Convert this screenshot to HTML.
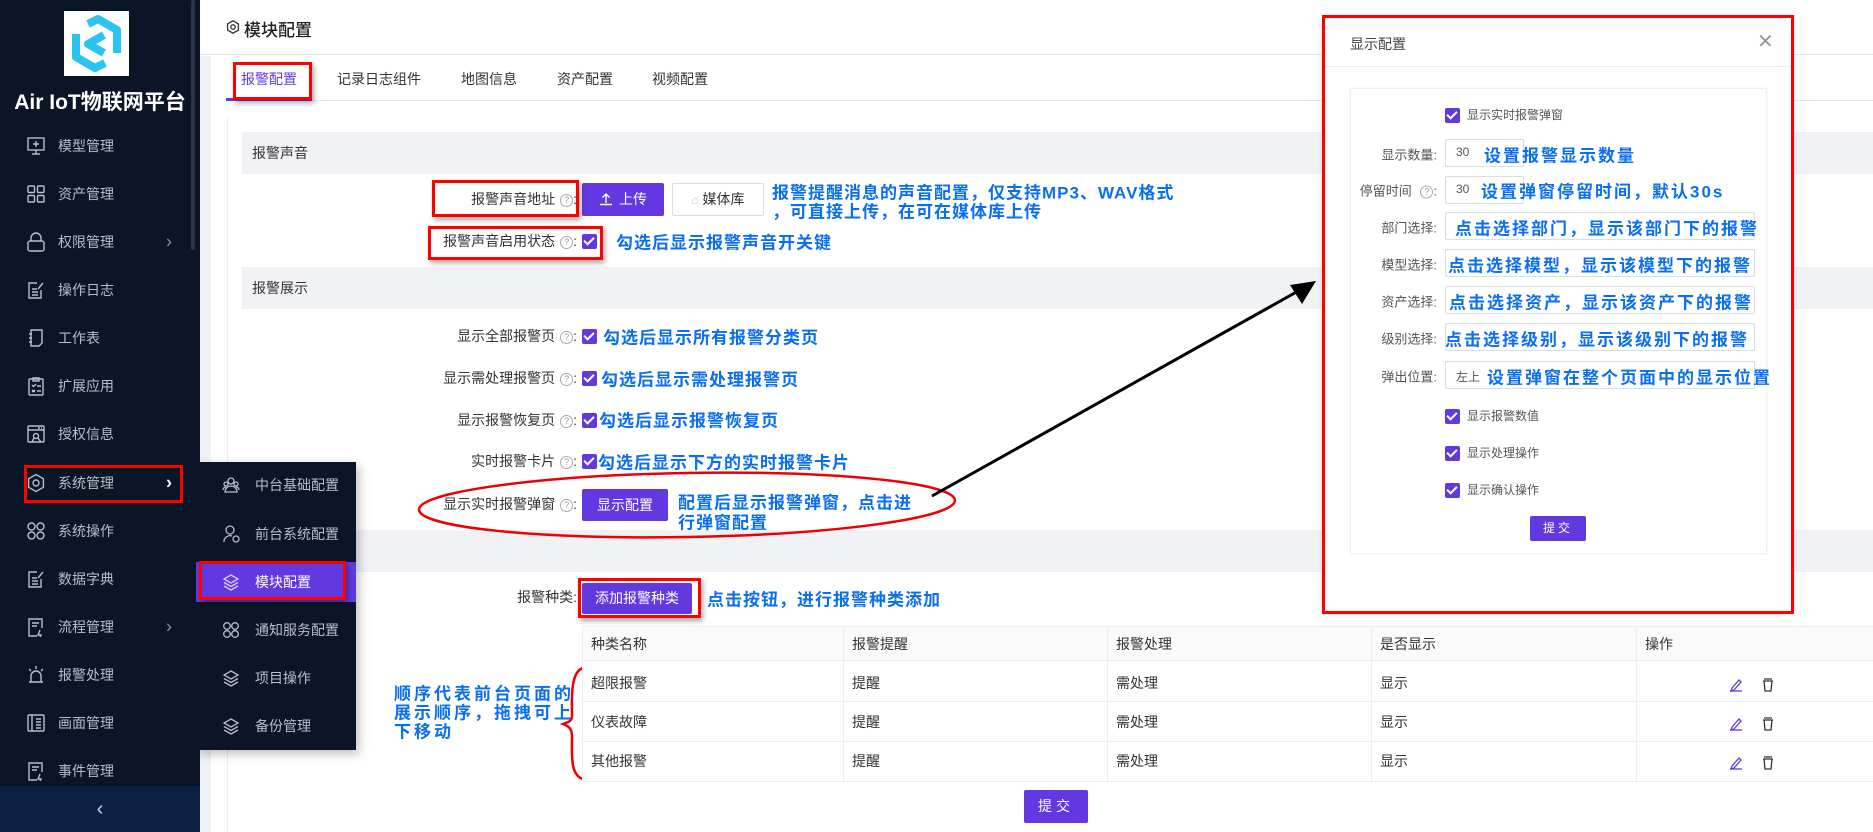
<!DOCTYPE html>
<html><head><meta charset="utf-8">
<style>
*{margin:0;padding:0;box-sizing:border-box}
body{width:1873px;height:832px;overflow:hidden;background:#fff;font-family:"Liberation Sans","Noto Sans CJK SC",sans-serif;font-size:14px;color:#333;position:relative}
.a{position:absolute}
.sb{left:0;top:0;width:200px;height:832px;background:#0a1528}
.mi{position:absolute;left:0;width:190px;height:48px;color:#b8bec9;font-size:14px}
.mi span{position:absolute;left:58px;top:50%;transform:translateY(-50%)}
.mi svg{position:absolute;left:26px;top:50%;transform:translateY(-50%)}
.arr{position:absolute;left:166px;top:50%;transform:translateY(-50%);color:#8a93a3;font-size:18px;font-style:normal}
.si{position:absolute;left:196px;width:160px;height:40px;color:#b8bec9}
.si span{position:absolute;left:59px;top:50%;transform:translateY(-50%)}
.si svg{position:absolute;left:26px;top:50%;transform:translateY(-50%)}
.band{position:absolute;left:242px;width:1631px;height:42px;background:#f0f2f5}
.band span{position:absolute;left:10px;top:50%;transform:translateY(-50%);color:#333}
.lbl{position:absolute;text-align:right;color:#333;white-space:nowrap;transform:translateY(-50%)}
.q{display:inline-block;width:13px;height:13px;border:1px solid #aaa;border-radius:50%;font-size:9px;line-height:11px;text-align:center;color:#999;margin-left:5px;vertical-align:1px;font-style:normal}
.cb{position:absolute;width:15px;height:15px;background:#6239e0;border-radius:2px}
.cb:after{content:"";position:absolute;left:4px;top:1px;width:4px;height:8px;border:solid #fff;border-width:0 2px 2px 0;transform:rotate(45deg)}
.btn{position:absolute;background:#6239e0;color:#fff;text-align:center;border-radius:2px}
.ann{position:absolute;color:#0a6ef0;font-weight:bold;font-size:17px;white-space:nowrap;letter-spacing:1px;transform:translateY(-50%);font-family:"Liberation Sans","Noto Sans CJK SC",sans-serif}
.red{position:absolute;border:3px solid #f00;box-shadow:2px 3px 5px rgba(0,0,0,.35)}
.td{position:absolute;font-size:14px;color:#333;transform:translateY(-50%)}
.dl{position:absolute;right:436px;font-size:13px;color:#555;transform:translateY(-50%);white-space:nowrap}
.inp{position:absolute;border:1px solid #ddd;border-radius:2px;background:#fff}
</style></head><body>

<!-- sidebar -->
<div class="a sb"></div>
<div class="a" style="left:191px;top:0;width:4px;height:250px;background:#2a3446;border-radius:2px"></div>
<div class="a" style="left:64px;top:11px;width:65px;height:65px;background:#fff">
<svg width="65" height="65" viewBox="0 0 65 65"><g fill="none" stroke="#2bc3f0" stroke-width="8" stroke-linejoin="round"><path d="M24 13 L34 8 L53 19 V42"/><path d="M41 52 L31 57 L12 46 V23"/><path d="M40 24 L24 33 L40 42"/></g></svg></div>
<div class="a" style="left:0;width:200px;top:86px;text-align:center;color:#fff;font-size:21px;font-weight:bold">Air IoT物联网平台</div>

<div class="mi" style="top:122px"><svg width="20" height="20" viewBox="0 0 20 20" fill="none" stroke="#b8bec9" stroke-width="1.4"><rect x="2" y="2" width="16" height="12"/><path d="M10 14v4M6 18h8M7 8h6M10 5v6"/></svg><span>模型管理</span></div>
<div class="mi" style="top:170px"><svg width="20" height="20" viewBox="0 0 20 20" fill="none" stroke="#b8bec9" stroke-width="1.4"><rect x="2" y="2" width="6.5" height="6.5" rx="1"/><rect x="11.5" y="2" width="6.5" height="6.5" rx="1"/><rect x="2" y="11.5" width="6.5" height="6.5" rx="1"/><rect x="11.5" y="11.5" width="6.5" height="6.5" rx="1"/></svg><span>资产管理</span></div>
<div class="mi" style="top:218px"><svg width="20" height="20" viewBox="0 0 20 20" fill="none" stroke="#b8bec9" stroke-width="1.4"><rect x="2" y="9" width="16" height="10" rx="2"/><path d="M5 9V6a5 5 0 0110 0v3"/></svg><span>权限管理</span><i class="arr">›</i></div>
<div class="mi" style="top:266px"><svg width="20" height="20" viewBox="0 0 20 20" fill="none" stroke="#b8bec9" stroke-width="1.4"><path d="M15 10v8H3V3h8M6 9h5M6 12h6M6 15h6M12 9l5-6"/></svg><span>操作日志</span></div>
<div class="mi" style="top:314px"><svg width="20" height="20" viewBox="0 0 20 20" fill="none" stroke="#b8bec9" stroke-width="1.4"><path d="M5 2h11v13l-3 3H5zM3 6h3M3 10h3M3 14h3"/></svg><span>工作表</span></div>
<div class="mi" style="top:362px"><svg width="20" height="20" viewBox="0 0 20 20" fill="none" stroke="#b8bec9" stroke-width="1.4"><rect x="3" y="3" width="14" height="16" rx="1"/><path d="M7 2h6v3H7zM6 9l1.5 1.5L10 8M11 10h4M6 14l3 2M9 14l-3 2M11 15h4"/></svg><span>扩展应用</span></div>
<div class="mi" style="top:410px"><svg width="20" height="20" viewBox="0 0 20 20" fill="none" stroke="#b8bec9" stroke-width="1.4"><rect x="2" y="2" width="16" height="16" rx="1"/><path d="M2 6h16M12 4h2M15 4h1"/><circle cx="10" cy="12" r="2.5"/><path d="M8 14l-2 4M12 14l3 4"/></svg><span>授权信息</span></div>
<div class="mi" style="top:459px"><svg width="20" height="20" viewBox="0 0 20 20" fill="none" stroke="#b8bec9" stroke-width="1.4"><path d="M10 1.5l7.4 4.25v8.5L10 18.5l-7.4-4.25v-8.5z"/><circle cx="10" cy="10" r="3"/></svg><span>系统管理</span><i class="arr" style="color:#fff;font-weight:bold">›</i></div>
<div class="mi" style="top:507px"><svg width="20" height="20" viewBox="0 0 20 20" fill="none" stroke="#b8bec9" stroke-width="1.4"><circle cx="5.5" cy="5.5" r="3.5"/><circle cx="14.5" cy="5.5" r="3.5"/><circle cx="5.5" cy="14.5" r="3.5"/><circle cx="14.5" cy="14.5" r="3.5"/></svg><span>系统操作</span></div>
<div class="mi" style="top:555px"><svg width="20" height="20" viewBox="0 0 20 20" fill="none" stroke="#b8bec9" stroke-width="1.4"><path d="M15 10v8H3V3h8M6 9h5M6 12h6M6 15h6M12 9l5-6"/></svg><span>数据字典</span></div>
<div class="mi" style="top:603px"><svg width="20" height="20" viewBox="0 0 20 20" fill="none" stroke="#b8bec9" stroke-width="1.4"><path d="M16 11V2H3v17h8M6 6h7M6 9h5M14 13l-2 5h3l-1 2"/></svg><span>流程管理</span><i class="arr">›</i></div>
<div class="mi" style="top:651px"><svg width="20" height="20" viewBox="0 0 20 20" fill="none" stroke="#b8bec9" stroke-width="1.4"><path d="M5 17v-6a5 5 0 0110 0v6M3 17h14M10 1v3M3 4l2 2M17 4l-2 2"/></svg><span>报警处理</span></div>
<div class="mi" style="top:699px"><svg width="20" height="20" viewBox="0 0 20 20" fill="none" stroke="#b8bec9" stroke-width="1.4"><rect x="2" y="2" width="16" height="16" rx="1"/><path d="M6 2v16M10 6h5M10 9h5M10 12h5M10 15h5"/></svg><span>画面管理</span></div>
<div class="mi" style="top:747px"><svg width="20" height="20" viewBox="0 0 20 20" fill="none" stroke="#b8bec9" stroke-width="1.4"><path d="M16 11V2H3v17h8M6 6h7M6 9h5M14 13l-2 5h3l-1 2"/></svg><span>事件管理</span></div>
<div class="a" style="left:0;top:786px;width:200px;height:46px;background:#0b2142;color:#cfd5df;text-align:center;line-height:46px;font-size:20px">‹</div>
<div class="red" style="left:24px;top:465px;width:159px;height:38px;box-shadow:none"></div>

<!-- header -->
<div class="a" style="left:200px;top:0;width:1673px;height:55px;background:#fff;border-bottom:1px solid #e8e8e8"></div>
<svg class="a" style="left:226px;top:20px" width="14" height="14" viewBox="0 0 14 14" fill="none" stroke="#333" stroke-width="1.3"><path d="M7 .8l5.4 3.1v6.2L7 13.2 1.6 10.1V3.9z"/><circle cx="7" cy="7" r="2.2"/></svg>
<div class="a" style="left:244px;top:16px;font-size:17px;color:#222;font-weight:500">模块配置</div>
<div class="a" style="left:200px;top:56px;width:11px;height:776px;background:#f0f2f5"></div>

<!-- tabs -->
<div class="a" style="left:226px;top:100px;width:1647px;height:1px;background:#e8e8e8"></div>
<div class="a" style="left:226px;top:98px;width:86px;height:3px;background:#6239e0"></div>
<div class="a" style="left:241px;top:69px;color:#6239e0">报警配置</div>
<div class="a" style="left:337px;top:69px">记录日志组件</div>
<div class="a" style="left:461px;top:69px">地图信息</div>
<div class="a" style="left:557px;top:69px">资产配置</div>
<div class="a" style="left:652px;top:69px">视频配置</div>
<div class="red" style="left:233px;top:62px;width:79px;height:38px"></div>
<div class="a" style="left:227px;top:117px;width:1px;height:715px;background:#eee"></div>

<!-- bands -->
<div class="band" style="top:132px"><span>报警声音</span></div>
<div class="band" style="top:267px"><span>报警展示</span></div>
<div class="band" style="top:530px"></div>

<!-- sound rows -->
<div class="lbl" style="right:1296px;top:199px">报警声音地址<i class="q">?</i>:</div>
<div class="btn" style="left:582px;top:183px;width:82px;height:33px;line-height:33px;font-size:14px"><svg width="14" height="14" viewBox="0 0 14 14" fill="none" stroke="#fff" stroke-width="1.4" style="vertical-align:-2px;margin-right:6px"><path d="M7 11V2M3.5 5.5L7 2l3.5 3.5M1 12.5h12"/></svg>上传</div>
<div class="a" style="left:672px;top:183px;width:92px;height:33px;border:1px solid #ddd;border-radius:2px;line-height:31px;text-align:center;color:#333"><span style="color:#ccc;font-size:12px">⌂</span> 媒体库</div>
<div class="ann" style="left:772px;top:191px">报警提醒消息的声音配置，仅支持MP3、WAV格式</div>
<div class="ann" style="left:772px;top:210px">，可直接上传，在可在媒体库上传</div>
<div class="red" style="left:432px;top:180px;width:147px;height:37px"></div>

<div class="lbl" style="right:1296px;top:241px">报警声音启用状态<i class="q">?</i>:</div>
<div class="cb" style="left:582px;top:234px"></div>
<div class="ann" style="left:616px;top:241px">勾选后显示报警声音开关键</div>
<div class="red" style="left:428px;top:226px;width:175px;height:34px"></div>

<!-- display rows -->
<div class="lbl" style="right:1296px;top:336px">显示全部报警页<i class="q">?</i>:</div>
<div class="cb" style="left:582px;top:329px"></div>
<div class="ann" style="left:603px;top:336px">勾选后显示所有报警分类页</div>
<div class="lbl" style="right:1296px;top:378px">显示需处理报警页<i class="q">?</i>:</div>
<div class="cb" style="left:582px;top:371px"></div>
<div class="ann" style="left:601px;top:378px">勾选后显示需处理报警页</div>
<div class="lbl" style="right:1296px;top:420px">显示报警恢复页<i class="q">?</i>:</div>
<div class="cb" style="left:582px;top:413px"></div>
<div class="ann" style="left:599px;top:419px">勾选后显示报警恢复页</div>
<div class="lbl" style="right:1296px;top:461px">实时报警卡片<i class="q">?</i>:</div>
<div class="cb" style="left:582px;top:454px"></div>
<div class="ann" style="left:598px;top:461px">勾选后显示下方的实时报警卡片</div>
<div class="lbl" style="right:1296px;top:504px">显示实时报警弹窗<i class="q">?</i>:</div>
<div class="btn" style="left:582px;top:489px;width:86px;height:32px;line-height:32px">显示配置</div>
<div class="ann" style="left:678px;top:501px">配置后显示报警弹窗，点击进</div>
<div class="ann" style="left:678px;top:521px">行弹窗配置</div>
<svg class="a" style="left:0;top:0" width="1873" height="832">
<ellipse cx="687" cy="505" rx="268" ry="32" fill="none" stroke="#e00" stroke-width="2.5" transform="rotate(-1 687 505)"/>
<line x1="932" y1="496" x2="1300" y2="290" stroke="#000" stroke-width="3"/>
<polygon points="1316,281 1290,285 1302,304" fill="#000"/>
<path d="M583 668 C570 672 572 700 572 715 C572 722 568 722 563 724 C568 726 572 728 572 736 C572 755 570 775 583 779" fill="none" stroke="#e00" stroke-width="2.5"/>
</svg>

<!-- kinds -->
<div class="lbl" style="right:1296px;top:597px">报警种类:</div>
<div class="btn" style="left:582px;top:583px;width:110px;height:31px;line-height:31px">添加报警种类</div>
<div class="ann" style="left:707px;top:598px">点击按钮，进行报警种类添加</div>
<div class="red" style="left:578px;top:578px;width:123px;height:40px"></div>

<div class="a" style="left:582px;top:626px;width:1291px;height:156px;border:1px solid #ebeef5;border-right:none"></div>
<div class="a" style="left:583px;top:627px;width:1290px;height:34px;background:#fafafa;border-bottom:1px solid #ebeef5"></div>
<div class="a" style="left:583px;top:701px;width:1290px;height:1px;background:#ebeef5"></div>
<div class="a" style="left:583px;top:741px;width:1290px;height:1px;background:#ebeef5"></div>
<div class="a" style="left:843px;top:627px;width:1px;height:155px;background:#ebeef5"></div>
<div class="a" style="left:1107px;top:627px;width:1px;height:155px;background:#ebeef5"></div>
<div class="a" style="left:1371px;top:627px;width:1px;height:155px;background:#ebeef5"></div>
<div class="a" style="left:1636px;top:627px;width:1px;height:155px;background:#ebeef5"></div>
<div class="td" style="left:591px;top:644px">种类名称</div><div class="td" style="left:852px;top:644px">报警提醒</div><div class="td" style="left:1116px;top:644px">报警处理</div><div class="td" style="left:1380px;top:644px">是否显示</div><div class="td" style="left:1645px;top:644px">操作</div>
<div class="td" style="left:591px;top:683px">超限报警</div><div class="td" style="left:852px;top:683px">提醒</div><div class="td" style="left:1116px;top:683px">需处理</div><div class="td" style="left:1380px;top:683px">显示</div>
<div class="td" style="left:591px;top:722px">仪表故障</div><div class="td" style="left:852px;top:722px">提醒</div><div class="td" style="left:1116px;top:722px">需处理</div><div class="td" style="left:1380px;top:722px">显示</div>
<div class="td" style="left:591px;top:761px">其他报警</div><div class="td" style="left:852px;top:761px">提醒</div><div class="td" style="left:1116px;top:761px">需处理</div><div class="td" style="left:1380px;top:761px">显示</div>
<svg class="a" style="left:1728px;top:675px" width="60" height="100" viewBox="0 0 60 100" fill="none" stroke-width="1.3">
<g><path d="M4 13l7-8 2 2-7 8-3 1z" stroke="#6239e0"/><path d="M2 16h12" stroke="#6239e0"/><path d="M36 4h8M35 6h10M36 6l1 10h6l1-10" stroke="#333"/></g>
<g transform="translate(0,39)"><path d="M4 13l7-8 2 2-7 8-3 1z" stroke="#6239e0"/><path d="M2 16h12" stroke="#6239e0"/><path d="M36 4h8M35 6h10M36 6l1 10h6l1-10" stroke="#333"/></g>
<g transform="translate(0,78)"><path d="M4 13l7-8 2 2-7 8-3 1z" stroke="#6239e0"/><path d="M2 16h12" stroke="#6239e0"/><path d="M36 4h8M35 6h10M36 6l1 10h6l1-10" stroke="#333"/></g>
</svg>
<div class="ann" style="left:394px;top:692px;letter-spacing:3px">顺序代表前台页面的</div>
<div class="ann" style="left:394px;top:711px;letter-spacing:3px">展示顺序，拖拽可上</div>
<div class="ann" style="left:394px;top:730px;letter-spacing:3px">下移动</div>
<div class="btn" style="left:1024px;top:790px;width:64px;height:33px;line-height:33px;letter-spacing:4px">提交</div>

<!-- submenu -->
<div class="a" style="left:195px;top:462px;width:161px;height:288px;background:#0a1528;box-shadow:3px 4px 10px rgba(0,0,0,.25)"></div>
<div class="si" style="top:465px"><svg width="18" height="18" viewBox="0 0 18 18" fill="none" stroke="#b8bec9" stroke-width="1.3"><circle cx="9" cy="5" r="3"/><circle cx="4" cy="8" r="2"/><circle cx="14" cy="8" r="2"/><path d="M3 16a6 6 0 0112 0zM1 14a3 3 0 013-3M17 14a3 3 0 00-3-3"/></svg><span>中台基础配置</span></div>
<div class="si" style="top:514px"><svg width="18" height="18" viewBox="0 0 18 18" fill="none" stroke="#b8bec9" stroke-width="1.3"><circle cx="8" cy="5" r="4"/><path d="M2 17a6 6 0 018-6"/><circle cx="14" cy="14" r="3"/></svg><span>前台系统配置</span></div>
<div class="a" style="left:196px;top:562px;width:160px;height:40px;background:#6239e0"></div>
<div class="si" style="top:562px;color:#fff"><svg width="18" height="18" viewBox="0 0 18 18" fill="none" stroke="#d8d0fa" stroke-width="1.3"><path d="M9 2l7 4-7 4-7-4zM2 9.5l7 4 7-4M2 13l7 4 7-4"/></svg><span>模块配置</span></div>
<div class="red" style="left:199px;top:561px;width:147px;height:39px"></div>
<div class="si" style="top:610px"><svg width="18" height="18" viewBox="0 0 18 18" fill="none" stroke="#b8bec9" stroke-width="1.3"><circle cx="5" cy="5" r="3.3"/><circle cx="13" cy="5" r="3.3"/><circle cx="5" cy="13" r="3.3"/><circle cx="13" cy="13" r="3.3"/></svg><span>通知服务配置</span></div>
<div class="si" style="top:658px"><svg width="18" height="18" viewBox="0 0 18 18" fill="none" stroke="#b8bec9" stroke-width="1.3"><path d="M9 2l7 4-7 4-7-4zM2 9.5l7 4 7-4M2 13l7 4 7-4"/></svg><span>项目操作</span></div>
<div class="si" style="top:706px"><svg width="18" height="18" viewBox="0 0 18 18" fill="none" stroke="#b8bec9" stroke-width="1.3"><path d="M9 2l7 4-7 4-7-4zM2 9.5l7 4 7-4M2 13l7 4 7-4"/></svg><span>备份管理</span></div>

<!-- dialog -->
<div class="a" style="left:1324px;top:18px;width:468px;height:594px;background:#fff;box-shadow:0 0 6px rgba(0,0,0,.3)"></div>
<div class="a" style="left:1350px;top:34px;font-size:14px;color:#444">显示配置</div>
<div class="a" style="left:1757px;top:29px;font-size:20px;color:#999">✕</div>
<div class="a" style="left:1324px;top:66px;width:468px;height:1px;background:#eee"></div>
<div class="a" style="left:1350px;top:88px;width:417px;height:466px;border:1px solid #f0f0f0;box-shadow:0 0 3px rgba(0,0,0,.05)"></div>
<div class="cb" style="left:1445px;top:108px"></div><div class="a" style="left:1467px;top:106px;font-size:12px;color:#555">显示实时报警弹窗</div>
<div class="dl" style="top:154px">显示数量:</div>
<div class="inp" style="left:1445px;top:139px;width:79px;height:28px"></div><div class="a" style="left:1456px;top:145px;font-size:12px;color:#555">30</div>
<div class="ann" style="left:1484px;top:154px;letter-spacing:2px">设置报警显示数量</div>
<div class="dl" style="top:190px">停留时间 <i class="q">?</i>:</div>
<div class="inp" style="left:1445px;top:176px;width:79px;height:28px"></div><div class="a" style="left:1456px;top:182px;font-size:12px;color:#555">30</div>
<div class="ann" style="left:1481px;top:190px;letter-spacing:2px">设置弹窗停留时间，默认30s</div>
<div class="dl" style="top:227px">部门选择:</div><div class="inp" style="left:1445px;top:212px;width:310px;height:28px"></div>
<div class="ann" style="left:1455px;top:227px;letter-spacing:2px">点击选择部门，显示该部门下的报警</div>
<div class="dl" style="top:264px">模型选择:</div><div class="inp" style="left:1445px;top:249px;width:310px;height:28px"></div>
<div class="ann" style="left:1448px;top:264px;letter-spacing:2px">点击选择模型，显示该模型下的报警</div>
<div class="dl" style="top:301px">资产选择:</div><div class="inp" style="left:1445px;top:286px;width:310px;height:28px"></div>
<div class="ann" style="left:1449px;top:301px;letter-spacing:2px">点击选择资产，显示该资产下的报警</div>
<div class="dl" style="top:338px">级别选择:</div><div class="inp" style="left:1445px;top:323px;width:310px;height:28px"></div>
<div class="ann" style="left:1445px;top:338px;letter-spacing:2px">点击选择级别，显示该级别下的报警</div>
<div class="dl" style="top:376px">弹出位置:</div><div class="inp" style="left:1445px;top:361px;width:310px;height:28px"></div>
<div class="a" style="left:1456px;top:368px;font-size:12px;color:#555">左上</div>
<div class="ann" style="left:1487px;top:376px;letter-spacing:2px">设置弹窗在整个页面中的显示位置</div>
<div class="cb" style="left:1445px;top:409px"></div><div class="a" style="left:1467px;top:407px;font-size:12px;color:#555">显示报警数值</div>
<div class="cb" style="left:1445px;top:446px"></div><div class="a" style="left:1467px;top:444px;font-size:12px;color:#555">显示处理操作</div>
<div class="cb" style="left:1445px;top:483px"></div><div class="a" style="left:1467px;top:481px;font-size:12px;color:#555">显示确认操作</div>
<div class="btn" style="left:1530px;top:516px;width:56px;height:25px;line-height:25px;font-size:12px;letter-spacing:3px">提交</div>
<div class="a" style="left:1322px;top:15px;width:472px;height:599px;border:3px solid #f00"></div>
</body></html>
